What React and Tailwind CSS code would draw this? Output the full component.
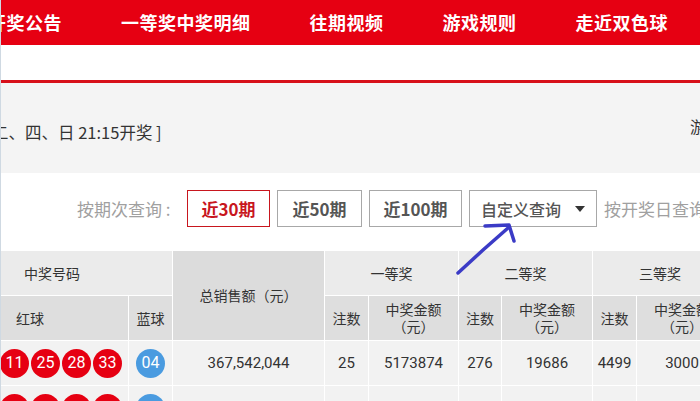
export default function App() {
  const hdr1 = "bg-[#ebebeb] flex items-center justify-center text-[14px] text-[#333]";
  const hdr2 = "bg-[#dedede] flex items-center justify-center text-[14px] text-[#333] text-center leading-[17px]";
  const cell = "bg-[#f2f2f2] flex items-center justify-center text-[15px] text-[#333] font-['Roboto','Noto_Sans_CJK_SC',sans-serif]";
  const rows = [
    { red: ["03", "09", "11", "25", "28", "33"], blue: "04", sales: "367,542,044", v: ["25", "5173874", "276", "19686", "4499", "3000"] },
    { red: ["02", "07", "11", "13", "26", "32"], blue: "05", sales: "344,862,796", v: ["7", "7316962", "101", "187348", "1488", "3000"] },
  ];
  return (
    <div className="relative w-[700px] h-[401px] overflow-hidden bg-white border-l border-[#cfd9e2] font-['Noto_Sans_CJK_SC','Noto_Sans',sans-serif]">
      {/* nav */}
      <div className="h-[45px] bg-[#e60012] flex items-center whitespace-nowrap">
        <div className="ml-[-13px] flex gap-[59px] text-white text-[18px] font-bold tracking-[0.5px] shrink-0">
          <span>开奖公告</span>
          <span>一等奖中奖明细</span>
          <span>往期视频</span>
          <span>游戏规则</span>
          <span>走近双色球</span>
        </div>
      </div>
      <div className="h-[35px] bg-white" />
      <div className="h-[3px] bg-[#d7101a]" />
      {/* gray band */}
      <div className="h-[90px] bg-[#f4f4f4] flex items-center whitespace-nowrap text-[16.5px] text-[#333]">
        <span className="ml-[-9px] w-[698px] shrink-0 pt-[8px]">二、四、日 21:15开奖 ]</span>
        <span className="shrink-0 pb-[4px] text-[16px]">游戏规则</span>
      </div>
      {/* query row */}
      <div className="h-[78px] flex items-start pt-[17px] pl-[76px] whitespace-nowrap">
        <div className="w-[110px] h-[37px] flex items-center text-[17px] text-[#a0a0a0] shrink-0">按期次查询 :</div>
        <div className="flex gap-[7px] shrink-0">
          <div className="w-[83px] h-[37px] border border-[#c8161e] text-[#c8161e] text-[17px] font-bold flex items-center justify-center">近30期</div>
          <div className="w-[85px] h-[37px] border border-[#a8a8a8] text-[#555] text-[17px] font-bold flex items-center justify-center">近50期</div>
          <div className="w-[93px] h-[37px] border border-[#a8a8a8] text-[#555] text-[17px] font-bold flex items-center justify-center">近100期</div>
          <div className="w-[128px] h-[37px] border border-[#a8a8a8] text-[#555] text-[16px] font-medium flex items-center pl-[11px]">
            <span>自定义查询</span>
            <span className="ml-[14px] w-0 h-0 border-l-[5px] border-r-[5px] border-t-[6px] border-l-transparent border-r-transparent border-t-[#333]" />
          </div>
          <div className="h-[37px] flex items-center text-[17px] text-[#a0a0a0]">按开奖日查询</div>
        </div>
      </div>
      {/* table */}
      <div className="ml-[-69px] w-max grid grid-cols-[196px_43px_151px_43px_89px_42px_90px_43px_90px] grid-rows-[44px_44px_44px_44px] gap-px bg-white">
        <div className={`${hdr1} col-span-2`}>中奖号码</div>
        <div className="row-span-2 bg-[#dcdcdc] flex items-center justify-center text-[14px] text-[#333]">总销售额（元）</div>
        <div className={`${hdr1} col-span-2`}>一等奖</div>
        <div className={`${hdr1} col-span-2`}>二等奖</div>
        <div className={`${hdr1} col-span-2`}>三等奖</div>
        <div className={hdr2}>红球</div>
        <div className={hdr2}>蓝球</div>
        <div className={hdr2}>注数</div>
        <div className={hdr2}>中奖金额<br />（元）</div>
        <div className={hdr2}>注数</div>
        <div className={hdr2}>中奖金额<br />（元）</div>
        <div className={hdr2}>注数</div>
        <div className={hdr2}>中奖金额<br />（元）</div>
        {rows.map((r, i) => [
          <div key={`r${i}`} className={`${cell} gap-[2px]`}>
            {r.red.map((n, j) => (
              <span key={j} className="w-[29px] h-[29px] rounded-full bg-[#e60012] text-white text-[16px] flex items-center justify-center">{n}</span>
            ))}
          </div>,
          <div key={`b${i}`} className={cell}>
            <span className="w-[29px] h-[29px] rounded-full bg-[#4a9be0] text-white text-[16px] flex items-center justify-center">{r.blue}</span>
          </div>,
          <div key={`s${i}`} className={cell}>{r.sales}</div>,
          ...r.v.map((v, j) => (
            <div key={`v${i}${j}`} className={cell}>{v}</div>
          )),
        ])}
      </div>
      {/* hand-drawn arrow annotation */}
      <svg className="absolute left-0 top-0 pointer-events-none" width="700" height="401" viewBox="0 0 700 401">
        <path d="M457 273 L482 250 L507 228" fill="none" stroke="#3b3bc6" strokeWidth="3.5" strokeLinecap="round" strokeLinejoin="round" />
        <path d="M484 226 L508 225 L513 241" fill="none" stroke="#3b3bc6" strokeWidth="3.5" strokeLinecap="round" strokeLinejoin="round" />
      </svg>
    </div>
  );
}
